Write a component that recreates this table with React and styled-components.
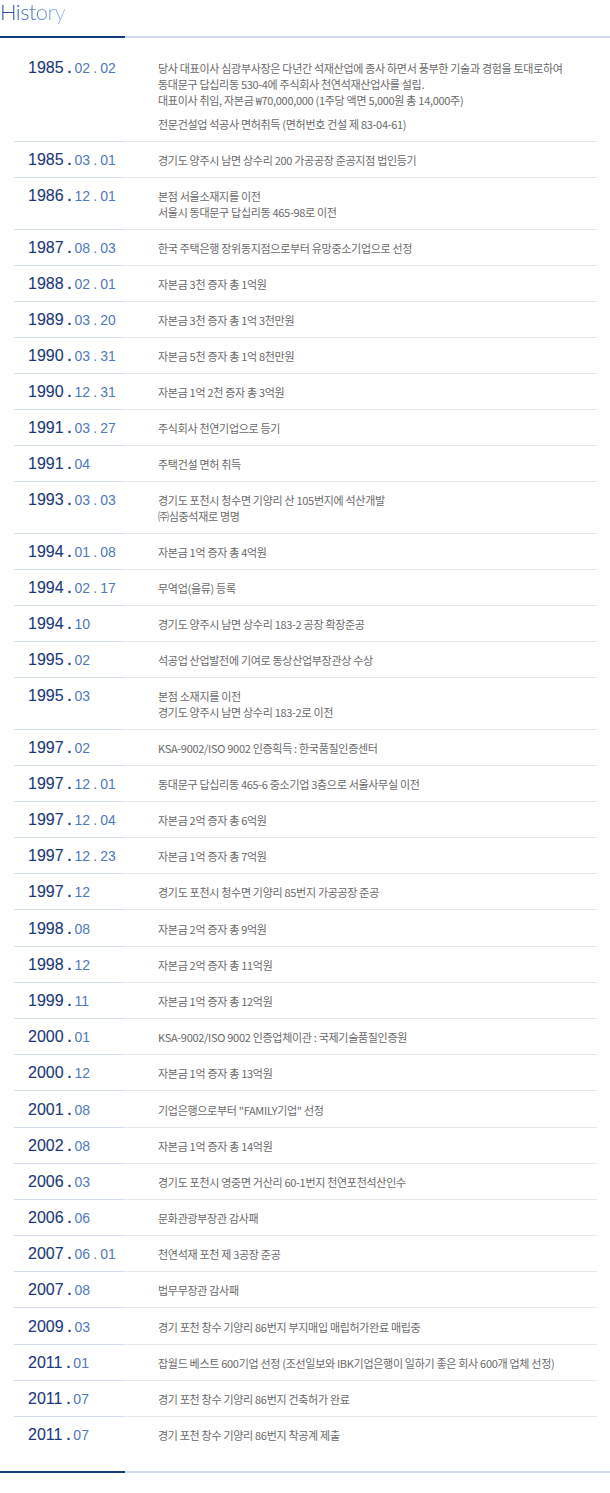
import React from 'react'
import styled, { createGlobalStyle } from 'styled-components'

const GlobalStyle = createGlobalStyle`
  body {
    margin: 0;
    background: #fff;
    font-family: 'Noto Sans CJK KR', 'Noto Sans', sans-serif;
  }
`

// HISTORY DATA: [year, rest of date, lines, extra paragraph]
const history = [
  ['1985', '02.02', [
    '당사 대표이사 심광부사장은 다년간 석재산업에 종사 하면서 풍부한 기술과 경험을 토대로하여',
    '동대문구 답십리동 530-4에 주식회사 천연석재산업사를 설립.',
    '대표이사 취임, 자본금 ₩70,000,000 (1주당 액면 5,000원 총 14,000주)',
  ], '전문건설업 석공사 면허취득 (면허번호 건설 제 83-04-61)'],
  ['1985', '03.01', ['경기도 양주시 남면 상수리 200 가공공장 준공지점 법인등기']],
  ['1986', '12.01', ['본점 서울소재지를 이전', '서울시 동대문구 답십리동 465-98로 이전']],
  ['1987', '08.03', ['한국 주택은행 장위동지점으로부터 유망중소기업으로 선정']],
  ['1988', '02.01', ['자본금 3천 증자 총 1억원']],
  ['1989', '03.20', ['자본금 3천 증자 총 1억 3천만원']],
  ['1990', '03.31', ['자본금 5천 증자 총 1억 8천만원']],
  ['1990', '12.31', ['자본금 1억 2천 증자 총 3억원']],
  ['1991', '03.27', ['주식회사 천연기업으로 등기']],
  ['1991', '04', ['주택건설 면허 취득']],
  ['1993', '03.03', ['경기도 포천시 청수면 기양리 산 105번지에 석산개발', '㈜심중석재로 명명']],
  ['1994', '01.08', ['자본금 1억 증자 총 4억원']],
  ['1994', '02.17', ['무역업(을류) 등록']],
  ['1994', '10', ['경기도 양주시 남면 상수리 183-2 공장 확장준공']],
  ['1995', '02', ['석공업 산업발전에 기여로 동상산업부장관상 수상']],
  ['1995', '03', ['본점 소재지를 이전', '경기도 양주시 남면 상수리 183-2로 이전']],
  ['1997', '02', ['KSA-9002/ISO 9002 인증획득 : 한국품질인증센터']],
  ['1997', '12.01', ['동대문구 답십리동 465-6 중소기업 3층으로 서울사무실 이전']],
  ['1997', '12.04', ['자본금 2억 증자 총 6억원']],
  ['1997', '12.23', ['자본금 1억 증자 총 7억원']],
  ['1997', '12', ['경기도 포천시 청수면 기양리 85번지 가공공장 준공']],
  ['1998', '08', ['자본금 2억 증자 총 9억원']],
  ['1998', '12', ['자본금 2억 증자 총 11억원']],
  ['1999', '11', ['자본금 1억 증자 총 12억원']],
  ['2000', '01', ['KSA-9002/ISO 9002 인증업체이관 : 국제기술품질인증원']],
  ['2000', '12', ['자본금 1억 증자 총 13억원']],
  ['2001', '08', ['기업은행으로부터 "FAMILY기업" 선정']],
  ['2002', '08', ['자본금 1억 증자 총 14억원']],
  ['2006', '03', ['경기도 포천시 영중면 거산리 60-1번지 천연포천석산인수']],
  ['2006', '06', ['문화관광부장관 감사패']],
  ['2007', '06.01', ['천연석재 포천 제 3공장 준공']],
  ['2007', '08', ['법무무장관 감사패']],
  ['2009', '03', ['경기 포천 창수 기양리 86번지 부지매입 매립허가완료 매립중']],
  ['2011', '01', ['잡월드 베스트 600기업 선정 (조선일보와 IBK기업은행이 일하기 좋은 회사 600개 업체 선정)']],
  ['2011', '07', ['경기 포천 창수 기양리 86번지 건축허가 완료']],
  ['2011', '07', ['경기 포천 창수 기양리 86번지 착공계 제출']],
]

// SPLIT "12.01" INTO PARTS WITH DOTS BETWEEN
const renderRest = rest =>
  rest.split('.').map((part, i) => (
    <React.Fragment key={i}>
      {i > 0 && <Dot>.</Dot>}
      <Part>{part}</Part>
    </React.Fragment>
  ))

const App = () => {
  return (
    <Page>
      <GlobalStyle />
      <Title>History</Title>
      <Rule />
      <List>
        {history.map(([year, rest, lines, extra], idx) => (
          <Row key={idx}>
            <DateCell>
              <Year>{year}</Year>
              <Dot $dark>.</Dot>
              {renderRest(rest)}
            </DateCell>
            <Desc>
              {lines.map((line, i) => <div key={i}>{line}</div>)}
              {extra && <Extra>{extra}</Extra>}
            </Desc>
          </Row>
        ))}
      </List>
      <Rule />
    </Page>
  )
}

const Page = styled.div`
  width: 610px;
  padding-bottom: 21px;
`

const Title = styled.h2`
  margin: 0;
  padding-top: 1px;
  height: 36px;
  box-sizing: border-box;
  font-family: Lato, 'Open Sans', sans-serif;
  font-weight: 300;
  font-size: 22px;
  line-height: 22px;
  letter-spacing: -0.6px;
  display: inline-block;
  background: linear-gradient(to right, #1f4f9e 0%, #3d6cb8 45%, #a6c0ea 100%);
  -webkit-background-clip: text;
  background-clip: text;
  color: transparent;
`

const Rule = styled.div`
  height: 2px;
  background: linear-gradient(to right, #163d7c 125px, #d3dcea 125px);
`

const List = styled.ul`
  list-style: none;
  margin: 0 13px 19px 14px;
  padding: 12px 0 0;
`

const Row = styled.li`
  display: grid;
  grid-template-columns: 144px 1fr;
  padding: 10px 0 9px;
  border-bottom: 1px solid;
  border-image: linear-gradient(to right, #d3dcea 111px, #e4e8ee 111px) 1;

  &:nth-child(n + 20) {
    padding-top: 10.2px;
  }

  &:last-child {
    border-bottom: none;
    border-image: none;
  }
`

const DateCell = styled.div`
  height: 16px;
  padding-left: 14px;
  font-family: 'Liberation Sans', Arial, sans-serif;
  line-height: 16px;
  white-space: nowrap;

  span {
    line-height: 16px;
  }
`

const Year = styled.span`
  color: #1c3a78;
  font-size: 16px;
  -webkit-text-stroke: 0.1px #1c3a78;
`

const Dot = styled.span`
  display: inline-block;
  margin: ${p => (p.$dark ? '0 3px 0 4px' : '0 3px')};
  font-size: 14px;
  font-weight: ${p => (p.$dark ? 700 : 400)};
  color: ${p => (p.$dark ? '#1c3a78' : '#5279b8')};
`

const Part = styled.span`
  color: #5279b8;
  font-size: 14px;
  letter-spacing: 0.1px;
`

const Desc = styled.div`
  font-size: 11px;
  line-height: 16px;
  color: #6a6a6a;
  letter-spacing: -0.3px;
  white-space: nowrap;
`

const Extra = styled.div`
  margin-top: 8px;
`

export default App
